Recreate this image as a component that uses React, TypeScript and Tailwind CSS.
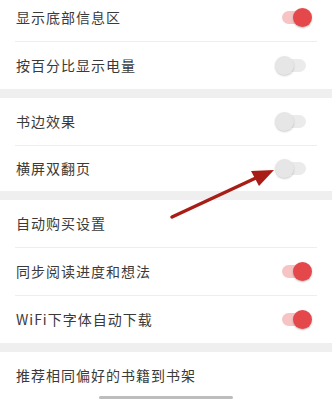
import React from 'react';

type Item = { label: string; toggle?: boolean; on?: boolean; h?: string };

const sections: Item[][] = [
  [
    { label: '显示底部信息区', toggle: true, on: true },
    { label: '按百分比显示电量', toggle: true, on: false },
  ],
  [
    { label: '书边效果', toggle: true, on: false },
    { label: '横屏双翻页', toggle: true, on: false, h: 'h-[45px]' },
  ],
  [
    { label: '自动购买设置' },
    { label: '同步阅读进度和想法', toggle: true, on: true },
    { label: 'WiFi下字体自动下载', toggle: true, on: true },
  ],
  [{ label: '推荐相同偏好的书籍到书架' }],
];

function Toggle({ on }: { on: boolean }) {
  return (
    <div className="relative w-[37px] h-[19px]">
      <div
        className={
          on
            ? 'absolute left-[7px] top-[3px] w-[24px] h-[13px] rounded-full bg-[#f7c4c4]'
            : 'absolute left-[7px] top-[3px] w-[24px] h-[13px] rounded-full bg-[#ebebeb]'
        }
      />
      <div
        className={
          on
            ? 'absolute left-[18px] top-0 w-[19px] h-[19px] rounded-full bg-[#e4484a] shadow-[0_1px_2px_rgba(0,0,0,0.25)]'
            : 'absolute left-0 top-0 w-[19px] h-[19px] rounded-full bg-[#e6e6e6] shadow-[0_1px_2px_rgba(0,0,0,0.2)]'
        }
      />
    </div>
  );
}

function Row({ item }: { item: Item }) {
  return (
    <div className={`flex items-center justify-between pl-4 pr-[20px] ${item.h ?? 'h-[47px]'}`}>
      <span className="text-[14px] tracking-[1px] text-[#3a3a3a]">{item.label}</span>
      {item.toggle && <Toggle on={!!item.on} />}
    </div>
  );
}

export default function App() {
  return (
    <div
      className="relative w-[332px] h-[400px] overflow-hidden bg-white"
      style={{ fontFamily: '"Noto Sans CJK SC", "Noto Sans", sans-serif' }}
    >
      <div className="mt-[-6px] flex flex-col">
        {sections.map((sec, si) => (
          <div key={si} className="flex flex-col">
            {si > 0 && <div className="h-[9px] bg-[#efefef]" />}
            {sec.map((item, i) => (
              <div key={item.label}>
                {i > 0 && <div className="mx-[15px] h-px bg-[#eeeeee]" />}
                <Row item={item} />
              </div>
            ))}
          </div>
        ))}
      </div>

      {/* home indicator */}
      <div className="absolute left-[99px] bottom-[1px] w-[134px] h-[3px] rounded-full bg-[#bdbdbd]" />

      {/* annotation arrow */}
      <svg className="absolute left-0 top-0" width="332" height="400" viewBox="0 0 332 400">
        <line x1="172" y1="217" x2="258" y2="177" stroke="#a81e16" strokeWidth="3.5" strokeLinecap="round" />
        <polygon points="274,170 251,171 259,186" fill="#a81e16" />
      </svg>
    </div>
  );
}
